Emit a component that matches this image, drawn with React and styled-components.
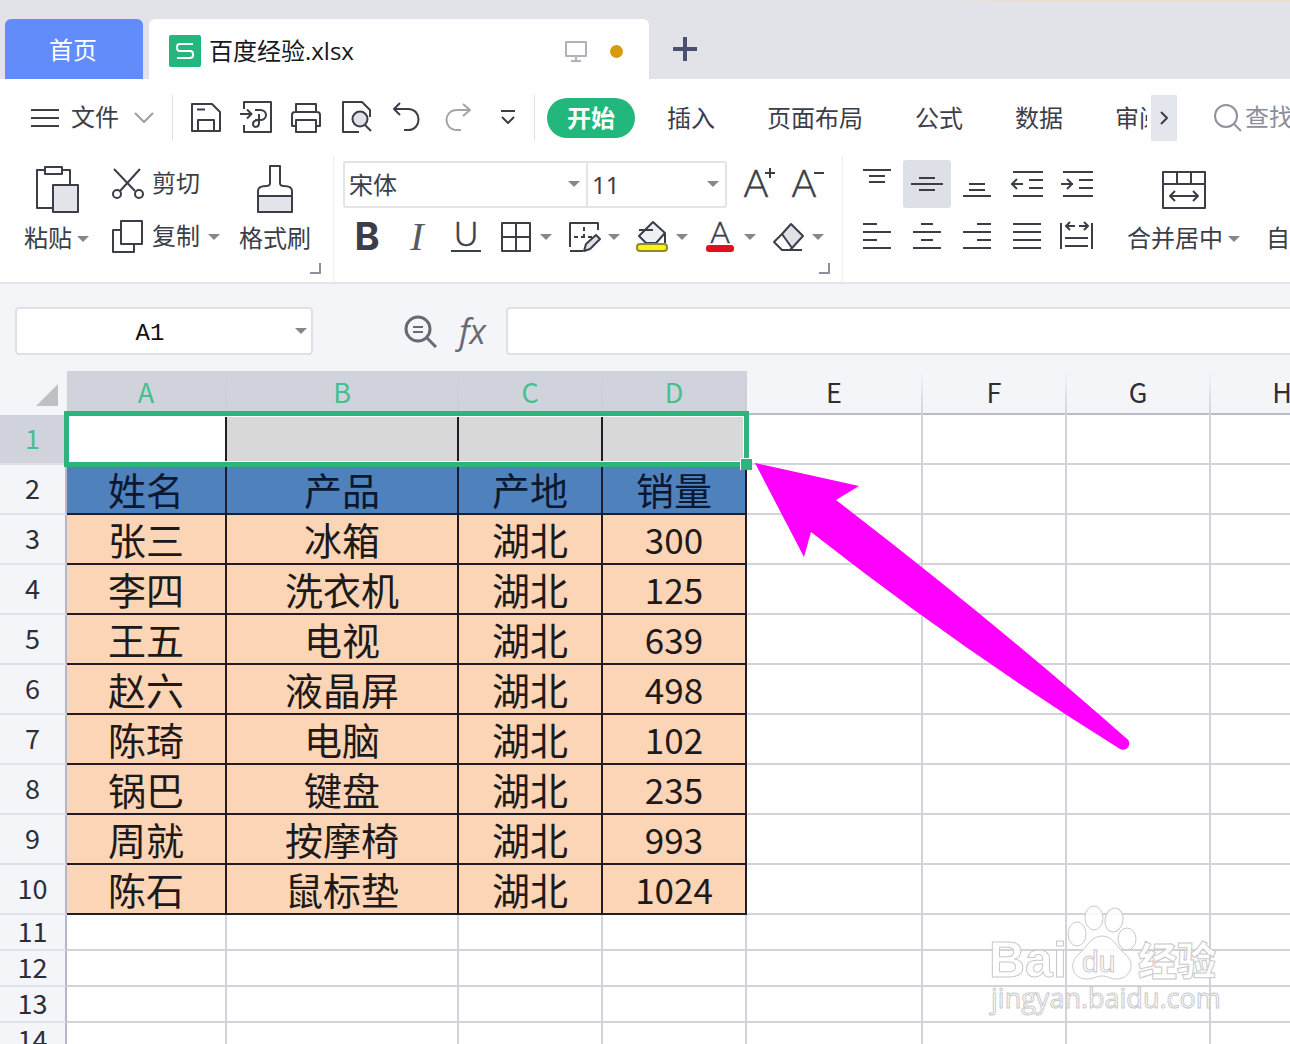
import React, { useState } from "react";
import styled, { createGlobalStyle, css } from "styled-components";

const ink = "#3b3e48";
const green = "#2fb37c";
const grid = "#d2d3dc";
const panel = "#f4f5f9";

const GlobalStyle = createGlobalStyle`
  * { box-sizing: border-box; }
  html, body { margin: 0; }
  body {
    font-family: "Liberation Sans", "Noto Sans CJK SC", sans-serif;
    font-size: 24px;
    color: ${ink};
    background: #fff;
    overflow: hidden;
  }
  button, input, select { font: inherit; color: inherit; }
  svg { display: block; flex: none; }
`;

const Window = styled.div`
  display: flex;
  flex-direction: column;
  height: 100vh;
  overflow: hidden;
`;

const PlainButton = styled.button`
  display: flex;
  align-items: center;
  flex: none;
  padding: 0;
  border: 0;
  background: none;
  line-height: 28px;
  white-space: nowrap;
  cursor: pointer;
`;

/* ---------- document tabs ---------- */

const TabStrip = styled.header`
  display: flex;
  flex: none;
  gap: 6px;
  padding: 19px 5px 0;
  background:
    linear-gradient(90deg, transparent 73%, #eadfd2 80%) top / 100% 2px no-repeat,
    #e1e3e8;
`;

const HomeTab = styled(PlainButton)`
  justify-content: center;
  width: 138px;
  height: 60px;
  padding: 4px 2px 0 0;
  border-radius: 6px 6px 0 0;
  background: #628cfa;
  color: #fff;
`;

const FileTab = styled.div`
  display: flex;
  align-items: center;
  width: 500px;
  height: 60px;
  padding: 4px 26px 0 20px;
  border-radius: 6px 6px 0 0;
  background: #fff;
  color: #16181d;
`;

const FileName = styled.span`
  flex: 1;
  padding-left: 8px;
  font-family: "Open Sans", "Noto Sans CJK SC", sans-serif;
  line-height: 32px;
`;

const UnsavedDot = styled.span`
  width: 13px;
  height: 13px;
  margin-left: 22px;
  border-radius: 50%;
  background: #d89a10;
`;

const NewTab = styled(PlainButton)`
  padding: 0 18px;
`;

/* ---------- menu bar ---------- */

const MenuBar = styled.div`
  display: flex;
  flex: none;
  align-items: center;
  height: 76px;
  padding: 2px 0 0 31px;
`;

const FileMenu = styled(PlainButton)`
  gap: 12px;
`;

const Rule = styled.span`
  flex: none;
  width: 1px;
  height: 46px;
  margin: 0 ${(p) => p.$after}px 0 ${(p) => p.$before}px;
  background: #dfe2e4;
`;

const QuickTools = styled.div`
  display: flex;
  gap: 14px;
`;

const Nav = styled.nav`
  display: flex;
  flex: 1 1 0;
  gap: 12px;
  min-width: 0;
  overflow: hidden;
`;

const NavLink = styled.a`
  flex: none;
  padding: 2px 20px 0;
  border-radius: 20px;
  line-height: 38px;
  white-space: nowrap;
  text-decoration: none;
  color: ${ink};
  ${(p) =>
    p.$active &&
    css`
      background: #22b77c;
      color: #fff;
      font-weight: 700;
    `}
`;

const NavMore = styled(PlainButton)`
  justify-content: center;
  width: 26px;
  height: 46px;
  margin-left: 4px;
  background: #e4e6ee;
`;

const Search = styled(PlainButton)`
  flex: 0 0 113px;
  padding-left: 36px;
  gap: 2px;
  overflow: hidden;
  color: #8a8e9b;
`;

/* ---------- ribbon ---------- */

const Ribbon = styled.section`
  display: flex;
  flex: none;
  height: 129px;
  border-bottom: 2px solid #e3e5e9;
  overflow: hidden;
`;

const Group = styled.div`
  position: relative;
  display: flex;
  flex: none;
  gap: ${(p) => p.$gap || 0}px;
  padding: 5px ${(p) => p.$right || 0}px 0 ${(p) => p.$left}px;
  border-right: 1px solid ${(p) => (p.$last ? "transparent" : "#eceef0")};
`;

const Launcher = styled(PlainButton)`
  position: absolute;
  right: 12px;
  bottom: 8px;
  width: 11px;
  height: 11px;
  border: solid #8d9099;
  border-width: 0 2px 2px 0;
`;

const Rows = styled.div`
  display: flex;
  flex-direction: column;
  gap: 5px;
`;

const ClipRows = styled(Rows)`
  margin: 0 19px 0 23px;
`;

const Row = styled.div`
  display: flex;
  align-items: center;
  gap: ${(p) => p.$gap || 0}px;
  height: 48px;
`;

const BigButton = styled(PlainButton)`
  flex-direction: column;
  height: 101px;
`;

const BigIcon = styled.span`
  display: flex;
  align-items: center;
  height: 57px;
`;

const Label = styled.span`
  display: flex;
  align-items: center;
  gap: 5px;
  height: 44px;
`;

const RowButton = styled(PlainButton)`
  gap: 8px;
`;

const ToolButton = styled(PlainButton)`
  justify-content: center;
  width: 48px;
  height: 48px;
  border-radius: 3px;
  background: ${(p) => (p.$active ? "#dde1e7" : "none")};
`;

const SplitButton = styled(PlainButton)`
  gap: 6px;
  width: 66px;
  height: 48px;
  padding-left: 5px;
`;

const FontBox = styled.div`
  display: flex;
  height: 47px;
  margin-right: 8px;
  border: 2px solid #e4e4e7;
  border-radius: 3px;
`;

const SelectWrap = styled.label`
  display: grid;
  grid-template-columns: 1fr 18px;
  align-items: center;
  width: ${(p) => p.$width}px;

  & + & { border-left: 2px solid #e4e4e7; }
  svg { grid-area: 1 / 2; pointer-events: none; }
`;

const Select = styled.select`
  grid-area: 1 / 1 / 2 / 3;
  width: 100%;
  height: 100%;
  padding: 0 4px;
  border: 0;
  background: none;
  font-family: "Noto Sans", "Noto Sans CJK SC", sans-serif;
  appearance: none;
  outline: none;
`;

/* ---------- formula bar ---------- */

const FormulaBar = styled.section`
  display: flex;
  flex: none;
  align-items: center;
  padding: 23px 0 16px 15px;
  background: ${panel};
`;

const NameBox = styled.label`
  display: flex;
  align-items: center;
  flex: none;
  width: 298px;
  height: 48px;
  margin-right: 90px;
  padding: 0 4px 0 0;
  border: 2px solid #dfe0e5;
  border-radius: 4px;
  background: #fff;
`;

const NameInput = styled.input`
  flex: 1;
  min-width: 0;
  padding: 4px 12px 0 0;
  border: 0;
  outline: none;
  background: none;
  text-align: center;
  font-family: "Liberation Mono", monospace;
  color: #111;
`;

const FxButton = styled(PlainButton)`
  margin: 0 20px 0 22px;
  font-family: "Open Sans", sans-serif;
  font-style: italic;
  font-size: 34px;
  line-height: 40px;
  color: #666a75;
`;

const FormulaInput = styled.input`
  flex: 1;
  min-width: 0;
  height: 48px;
  padding: 0 8px;
  border: 2px solid #dfe0e5;
  border-right: 0;
  border-radius: 4px 0 0 4px;
  outline: none;
  background: #fff;
`;

/* ---------- sheet ---------- */

const Sheet = styled.main`
  position: relative;
  flex: 1;
  min-height: 0;
  overflow: hidden;
`;

const Table = styled.table`
  width: 1355px;
  table-layout: fixed;
  border-collapse: separate;
  border-spacing: 0;
  font-family: "Noto Sans CJK SC", sans-serif;
`;

const Tr = styled.tr`
  height: ${(p) => p.$height}px;
`;

const headCell = css`
  padding: 0 0 3px;
  font-size: 27px;
  font-weight: 400;
  line-height: 30px;
  color: ${(p) => (p.$on ? "#45bf8c" : "#2c2f37")};
  background: ${(p) => (p.$on ? "#d0d3db" : panel)};
`;

const ColHead = styled.th`
  ${headCell}
  border-right: 2px solid;
  border-image: linear-gradient(${(p) => (p.$on ? "#d0d3db, #c9ccd5" : `${panel}, #cfd1da`)}) 1;
  border-width: 0 2px 0 0;
  box-shadow: inset 0 -2px 0 #b9bbc6;
`;

const RowHead = styled.th`
  ${headCell}
  border-right: 2px solid #b5b6c6;
  border-bottom: 2px solid #e0e1e9;
`;

const Corner = styled.th`
  padding: 0 9px 9px;
  vertical-align: bottom;
  background: ${panel};
  svg { margin-left: auto; }
`;

const fills = { head: "#4f81bd", body: "#fbd5b5", picked: "#d8d8d8", active: "#fff" };

const Cell = styled.td`
  padding: 0;
  border: solid ${(p) => (p.$fill ? "#231c26" : grid)};
  border-width: 0 2px 2px 0;
  background: ${(p) => fills[p.$fill] || "#fff"};
  color: ${(p) => (p.$fill === "head" ? "#0b1830" : "#20191a")};
  font-size: ${(p) => (p.$number ? 35 : 38)}px;
  line-height: 40px;
  text-align: center;
  white-space: nowrap;
`;

const Selection = styled.div`
  position: absolute;
  left: 64px;
  top: 40px;
  width: 685px;
  height: 56px;
  border: 5px solid ${green};
  box-shadow: inset 0 0 0 1px #fff;
  pointer-events: none;
`;

const FillHandle = styled.span`
  position: absolute;
  right: -8px;
  bottom: -8px;
  width: 12px;
  height: 12px;
  border: solid #fff;
  border-width: 1px 0 0 1px;
  background: ${green};
`;

const Pointer = styled.svg`
  position: absolute;
  left: 750px;
  top: 88px;
  pointer-events: none;
`;

const Watermark = styled.svg`
  position: absolute;
  right: 60px;
  bottom: 20px;
  pointer-events: none;
`;

/* ---------- drawings ---------- */

const Glyph = ({ w = 36, h = 36, color = ink, weight = 2, children }) => (
  <svg
    width={w}
    height={h}
    viewBox={`0 0 ${w} ${h}`}
    fill="none"
    stroke={color}
    strokeWidth={weight}
    strokeLinejoin="round"
    aria-hidden="true"
  >
    {children}
  </svg>
);

const Letter = ({ x, y, size, family = "Lato", weight = 300, italic, children }) => (
  <text
    x={x}
    y={y}
    fontSize={size}
    fontFamily={`${family}, sans-serif`}
    fontWeight={weight}
    fontStyle={italic ? "italic" : "normal"}
    textAnchor="middle"
    fill={ink}
    strokeWidth={weight === 300 ? 0.6 : 0}
  >
    {children}
  </text>
);

const Caret = () => (
  <svg width="12" height="8" viewBox="0 0 12 8" aria-hidden="true">
    <path d="M0 1h12L6 7z" fill="#85878f" />
  </svg>
);

const quickTools = [
  ["保存", <Glyph><path d="M4 4h20l8 8v19H4zM10 31V20h16v11M9 9.5h8" /></Glyph>],
  ["输出为PDF", <Glyph><path d="M6 9V2h27v30H6v-7M2 14h11M9 9.5l4.5 4.5L9 18.500M17 10h5c8 0 8 10 0 10h-5M21 14v9c0 5-6 5-6 1 0-3 3-4 6-4" /></Glyph>],
  ["打印", <Glyph><path d="M8 12V4h20v8M8 26H4V15q0-3 3-3h22q3 0 3 3v11h-4M8 20h20v12H8z" /></Glyph>],
  ["打印预览", <Glyph><path d="M21 32H5V2h19l8 8v7" /><circle cx="22" cy="19" r="7.5" fill="#dfe2e7" /><path d="M27 25l6 6" /></Glyph>],
  ["撤销", <Glyph><path d="M12 3L6 9l6 6M6 9h14c14 0 14 21 0 21h-4" /></Glyph>],
  ["恢复", <Glyph color="#a3a4a8"><path d="M25 4l7 6-7 6M32 10H19c-14 0-14 20 0 20h4" /></Glyph>],
  ["更多", <Glyph><path d="M13 11h14M14 17l6 6 6-6" /></Glyph>],
];

const menus = ["开始", "插入", "页面布局", "公式", "数据", "审阅"];

const alignTop = [
  ["顶端对齐", <Glyph><path d="M4 4h28M10 10h16M10 16h16" /></Glyph>],
  ["垂直居中", <Glyph><path d="M10 12h16M2 18h32M10 24h16" /></Glyph>],
  ["底端对齐", <Glyph><path d="M10 18h16M10 24h16M4 30h28" /></Glyph>],
  ["减少缩进", <Glyph><path d="M4 6h30M20 14h14M20 22h14M4 30h30M2 18h12M8 13l-5 5 5 5" /></Glyph>],
  ["增加缩进", <Glyph><path d="M4 6h30M20 14h14M20 22h14M4 30h30M2 18h12M8 13l5 5-5 5" /></Glyph>],
];

const alignBottom = [
  ["左对齐", <Glyph><path d="M4 5h14M4 13h28M4 21h14M4 29h28" /></Glyph>],
  ["水平居中", <Glyph><path d="M12 5h12M4 13h28M12 21h12M4 29h28" /></Glyph>],
  ["右对齐", <Glyph><path d="M18 5h14M4 13h28M18 21h14M4 29h28" /></Glyph>],
  ["两端对齐", <Glyph><path d="M4 5h28M4 13h28M4 21h28M4 29h28" /></Glyph>],
  ["分散对齐", <Glyph><path d="M2 4v26M33 4v26M6 19h23M6 27h23M7 7h9M11 3L7 7l4 4M20 7h9M25 3l4 4-4 4" /></Glyph>],
];

const textStyles = [
  ["加粗", <Glyph><Letter x="18" y="31" size="38" family="Inter" weight={700}>B</Letter></Glyph>],
  ["倾斜", <Glyph><g opacity="0.85"><Letter x="18" y="31" size="40" family="'Liberation Serif'" weight={400} italic>I</Letter></g></Glyph>],
  ["下划线", <Glyph><Letter x="17" y="27" size="34">U</Letter><path d="M2 32h30" /></Glyph>],
];

const paintTools = [
  ["边框", <Glyph><path d="M4 4h28v28H4zM18 4v28M4 18h28" /></Glyph>],
  ["绘制边框", <Glyph><path d="M32 11V4H4v24M4 32h13" /><path d="M8 18h18M18 8v14" strokeDasharray="4 3" /><path d="M18 32l2-7 10-9 4 4-10 10z" fill="#dfe2e7" /></Glyph>],
  ["填充颜色", <Glyph><path d="M12 24L5 17 19 3l12 11-9 10zM5 11h14M31 14v10" fill="#eef0f3" /><rect x="3" y="25" width="30" height="7" rx="3" fill="#fcf40f" stroke="#8d8b32" /></Glyph>],
  ["字体颜色", <Glyph><Letter x="18" y="24" size="30">A</Letter><rect x="4" y="26" width="28" height="7" rx="3" fill="#e0101c" stroke="none" /></Glyph>],
  ["清除", <Glyph><path d="M12 15L21 5l12 12-11 12z" fill="#dfe2e7" /><path d="M12 15l-8 8 8 8h8l2-2M20 31h12" /></Glyph>],
];

const columns = [
  ["A", 160], ["B", 232], ["C", 144], ["D", 144],
  ["E", 176], ["F", 144], ["G", 144], ["H", 144],
];

const records = [
  ["姓名", "产品", "产地", "销量"],
  ["张三", "冰箱", "湖北", "300"],
  ["李四", "洗衣机", "湖北", "125"],
  ["王五", "电视", "湖北", "639"],
  ["赵六", "液晶屏", "湖北", "498"],
  ["陈琦", "电脑", "湖北", "102"],
  ["锅巴", "键盘", "湖北", "235"],
  ["周就", "按摩椅", "湖北", "993"],
  ["陈石", "鼠标垫", "湖北", "1024"],
];

const lastRow = 14;

const fillOf = (row, col) => {
  if (col > 3 || row > 10) return undefined;
  if (row === 1) return col === 0 ? "active" : "picked";
  return row === 2 ? "head" : "body";
};

const Tools = ({ items, active }) =>
  items.map(([name, icon]) => (
    <ToolButton key={name} aria-label={name} $active={name === active}>{icon}</ToolButton>
  ));

function Grid() {
  return (
    <Table>
      <colgroup>
        <col style={{ width: 67 }} />
        {columns.map(([name, width]) => <col key={name} style={{ width }} />)}
      </colgroup>
      <thead>
        <Tr $height={44}>
          <Corner aria-label="全选">
            <svg width="22" height="22" viewBox="0 0 22 22"><path d="M22 0v22H0z" fill="#bfc0c4" /></svg>
          </Corner>
          {columns.map(([name], i) => <ColHead key={name} scope="col" $on={i < 4}>{name}</ColHead>)}
        </Tr>
      </thead>
      <tbody>
        {Array.from({ length: lastRow }, (_, i) => i + 1).map((row) => (
          <Tr key={row} $height={row > 10 ? 36 : 50}>
            <RowHead scope="row" $on={row === 1}>{row}</RowHead>
            {columns.map(([name], col) => {
              const text = records[row - 2]?.[col];
              return (
                <Cell key={name} $fill={fillOf(row, col)} $number={row > 2 && col === 3 && row < 11}>
                  {text}
                </Cell>
              );
            })}
          </Tr>
        ))}
      </tbody>
    </Table>
  );
}

export default function App() {
  const [formula, setFormula] = useState("");
  const [place, setPlace] = useState("A1");

  return (
    <Window>
      <GlobalStyle />
      <TabStrip>
        <HomeTab>首页</HomeTab>
        <FileTab>
          <svg width="32" height="32" viewBox="0 0 32 32" aria-hidden="true">
            <rect width="32" height="32" rx="2" fill="#22b77c" />
            <path d="M24 9H11q-3 0-3 3v1q0 3 3 3h10q3 0 3 3v1q0 3-3 3H8" fill="none" stroke="#fff" strokeWidth="2" />
          </svg>
          <FileName>百度经验.xlsx</FileName>
          <Glyph w={24} h={24} color="#b0b2ba"><path d="M2 3h20v14H2zM12 17v5M7 22h10" /></Glyph>
          <UnsavedDot />
        </FileTab>
        <NewTab aria-label="新建">
          <Glyph w={24} h={24} color="#4a5170" weight={4}><path d="M0 12h24M12 0v24" /></Glyph>
        </NewTab>
      </TabStrip>

      <MenuBar>
        <FileMenu>
          <Glyph w={28} h={20}><path d="M0 2h28M0 10h28M0 18h28" /></Glyph>
          文件
          <Glyph w={24} h={12} color="#9d9fa6"><path d="M4 1l9 9 9-9" /></Glyph>
        </FileMenu>
        <Rule $before={17} $after={15} />
        <QuickTools>
          {quickTools.map(([name, icon]) => <PlainButton key={name} aria-label={name}>{icon}</PlainButton>)}
        </QuickTools>
        <Rule $before={10} $after={12} />
        <Nav>
          {menus.map((name, i) => <NavLink key={name} href="#" $active={i === 0}>{name}</NavLink>)}
        </Nav>
        <NavMore aria-label="更多选项卡">
          <Glyph w={12} h={16}><path d="M3 2l6 6-6 6" /></Glyph>
        </NavMore>
        <Search>
          <Glyph w={30} h={30} color="#8f929e"><circle cx="13" cy="13" r="11" /><path d="M21 21l7 7" /></Glyph>
          查找命令
        </Search>
      </MenuBar>

      <Ribbon>
        <Group $left={24} $right={22}>
          <BigButton>
            <BigIcon>
              <Glyph w={44} h={48}>
                <path d="M10 5H2v38h18M27 5h8v14M10 2h17v7H10z" />
                <path d="M18 20h25v27H18z" fill="#e3e5ea" />
              </Glyph>
            </BigIcon>
            <Label>粘贴<Caret /></Label>
          </BigButton>
          <ClipRows>
            <Row>
              <RowButton>
                <Glyph w={32} h={36}>
                  <path d="M2 3l21 22M28 3L8 25" /><circle cx="5" cy="28" r="4" /><circle cx="27" cy="28" r="4" />
                </Glyph>
                剪切
              </RowButton>
            </Row>
            <Row>
              <RowButton>
                <Glyph w={32} h={36}><path d="M9 2h21v23H9zM9 11H1v22h21v-8" /></Glyph>
                复制<Caret />
              </RowButton>
            </Row>
          </ClipRows>
          <BigButton>
            <BigIcon>
              <Glyph w={38} h={50}>
                <path d="M2 32h34v16H2z" fill="#e3e5ea" />
                <path d="M14 2h10v17q0 3 4 3 8 0 8 5v5H2v-5q0-5 8-5 4 0 4-3z" />
              </Glyph>
            </BigIcon>
            <Label>格式刷</Label>
          </BigButton>
          <Launcher aria-label="剪贴板设置" />
        </Group>

        <Group $left={9} $right={11}>
          <Rows>
            <Row>
              <FontBox>
                <SelectWrap $width={241}>
                  <Select aria-label="字体"><option>宋体</option></Select>
                  <Caret />
                </SelectWrap>
                <SelectWrap $width={139}>
                  <Select aria-label="字号"><option>11</option></Select>
                  <Caret />
                </SelectWrap>
              </FontBox>
              <ToolButton aria-label="增大字号">
                <Glyph><Letter x="15" y="31" size="38">A</Letter><path d="M24 7h10M29 2v10" /></Glyph>
              </ToolButton>
              <ToolButton aria-label="减小字号">
                <Glyph><Letter x="15" y="31" size="38">A</Letter><path d="M25 7h10" /></Glyph>
              </ToolButton>
            </Row>
            <Row $gap={2}>
              <Tools items={textStyles} />
              {paintTools.map(([name, icon]) => (
                <SplitButton key={name} aria-label={name}>{icon}<Caret /></SplitButton>
              ))}
            </Row>
          </Rows>
          <Launcher aria-label="字体设置" />
        </Group>

        <Group $left={10} $gap={26} $last>
          <Rows>
            <Row $gap={2}><Tools items={alignTop} active="垂直居中" /></Row>
            <Row $gap={2}><Tools items={alignBottom} /></Row>
          </Rows>
          <BigButton>
            <BigIcon>
              <Glyph w={44} h={40}>
                <path d="M1 3h42v36H1zM1 15h42M15 3v12M29 3v12M8 27h28M13 22l-5 5 5 5M31 22l5 5-5 5" />
              </Glyph>
            </BigIcon>
            <Label>合并居中<Caret /></Label>
          </BigButton>
          <BigButton>
            <BigIcon />
            <Label>自动换行</Label>
          </BigButton>
        </Group>
      </Ribbon>

      <FormulaBar>
        <NameBox>
          <NameInput aria-label="名称框" value={place} onChange={(e) => setPlace(e.target.value)} />
          <Caret />
        </NameBox>
        <Glyph w={34} h={34} color="#666a75" weight={3}>
          <circle cx="15" cy="15" r="12" /><path d="M24 24l9 9" /><path d="M10 13h10M10 18h10" strokeWidth="2" />
        </Glyph>
        <FxButton aria-label="插入函数">fx</FxButton>
        <FormulaInput aria-label="编辑栏" value={formula} onChange={(e) => setFormula(e.target.value)} />
      </FormulaBar>

      <Sheet>
        <Grid />
        <Selection><FillHandle /></Selection>
        <Pointer width="390" height="300" viewBox="0 0 390 300" aria-hidden="true">
          <path d="M5 4L109 27 86 41Q246 164 376 279A6 6 0 0 1 370 290Q210 190 61 73L54 98Z" fill="#ff00ff" />
        </Pointer>
        <Watermark width="250" height="130" viewBox="0 0 250 130" fill="#fff" fillOpacity="0.85" stroke="#c9c9cb" strokeWidth="1" fontFamily="'Liberation Sans', 'Noto Sans CJK SC', sans-serif">
          <text x="9" y="83" fontSize="50" fontWeight="700">Bai</text>
          <ellipse cx="97" cy="40" rx="9" ry="12" />
          <ellipse cx="114" cy="24" rx="9" ry="12" />
          <ellipse cx="134" cy="26" rx="9" ry="12" transform="rotate(10 134 26)" />
          <ellipse cx="147" cy="45" rx="9" ry="11" />
          <path d="M122 42C134 42 137 54 146 61 156 70 150 85 137 85 130 85 128 82 122 82 116 82 114 85 107 85 94 85 88 72 97 62 106 54 111 42 122 42Z" />
          <text x="102" y="78" fontSize="30">du</text>
          <text x="158" y="81" fontSize="39" fontWeight="900">经验</text>
          <text x="11" y="114" fontSize="27" fontFamily="'Open Sans', sans-serif">jingyan.baidu.com</text>
        </Watermark>
      </Sheet>
    </Window>
  );
}
